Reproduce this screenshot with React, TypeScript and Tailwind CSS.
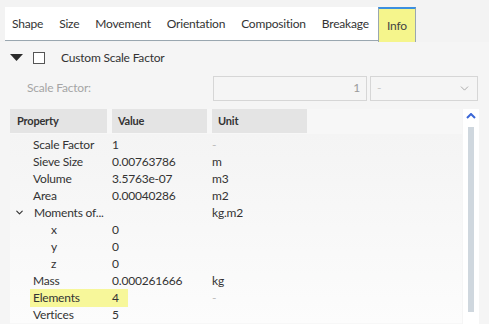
import { ChevronDown } from 'lucide-react'

const tabs = ['Shape', 'Size', 'Movement', 'Orientation', 'Composition', 'Breakage']

const rows = [
    { name: 'Scale Factor', value: '1', unit: '-', dim: true },
    { name: 'Sieve Size', value: '0.00763786', unit: 'm' },
    { name: 'Volume', value: '3.5763e-07', unit: 'm3' },
    { name: 'Area', value: '0.00040286', unit: 'm2' },
    { name: 'Moments of...', value: '', unit: 'kg.m2', group: true },
    { name: 'x', value: '0', unit: '', child: true },
    { name: 'y', value: '0', unit: '', child: true },
    { name: 'z', value: '0', unit: '', child: true },
    { name: 'Mass', value: '0.000261666', unit: 'kg' },
    { name: 'Elements', value: '4', unit: '-', dim: true, mark: true },
    { name: 'Vertices', value: '5', unit: '' },
]

export default function App() {
    return (
        <div className="h-[324px] w-[489px] overflow-hidden whitespace-nowrap bg-[#f3f3f3] text-[12px] tracking-[-0.2px] text-[#333] [font-family:Lato,'Noto_Sans',sans-serif]">
            {/* tab bar */}
            <div className="flex h-[42px] pt-[7px]">
                <div className="ml-[5px] flex h-[34px] w-[373px] items-center gap-[16px] border-b border-[#9aa7b0] bg-white pl-[7px]">
                    {tabs.map((t) => (
                        <span key={t}>{t}</span>
                    ))}
                </div>
                <div className="flex h-[35px] w-[38px] items-center justify-center border-x border-t-2 border-x-[#9aa7b0] border-t-[#3b8fe0] bg-[#f5f58c] text-[#444]">
                    Info
                </div>
            </div>

            {/* panel */}
            <div className="h-[282px] bg-[#f5f5f5] pl-[10px]">
                <div className="flex h-[30px] items-center pt-[2px]">
                    <svg width="13" height="8" viewBox="0 0 13 8" className="mr-[10px]">
                        <path d="M0 0 H13 L6.5 7 Z" fill="#2b2b2b" />
                    </svg>
                    <div className="mr-[16px] h-[12px] w-[12px] border border-[#555] bg-white" />
                    <span>Custom Scale Factor</span>
                </div>
                <div className="flex h-[32px] items-center">
                    <span className="ml-[17px] text-[#a5a5a5]">Scale Factor:</span>
                    <div className="ml-auto flex items-center pr-[11px]">
                        <div className="flex h-[25px] w-[154px] items-center justify-end border border-[#d6d6d6] bg-[#f5f5f5] pr-[6px] text-[#9a9a9a]">
                            1
                        </div>
                        <div className="ml-[3px] flex h-[25px] w-[108px] items-center justify-between border border-[#d6d6d6] bg-[#f5f5f5] px-[6px] text-[#c8c8c8]">
                            <span>-</span>
                            <ChevronDown className="size-[13px] text-[#999]" strokeWidth={1.5} />
                        </div>
                    </div>
                </div>

                {/* table */}
                <div className="mt-[5px] flex">
                    <div className="w-[452px] bg-[#f7f7f7]">
                        <div className="flex h-[25px] gap-[5px] bg-[#f7f7f7] pb-[1px] text-[11px] font-bold text-[#333]">
                            <div className="flex w-[97px] items-center bg-[#e4e4e4] px-[7px]">Property</div>
                            <div className="flex w-[95px] items-center bg-[#e4e4e4] px-[6px]">Value</div>
                            <div className="flex w-[95px] items-center bg-[#e4e4e4] px-[6px]">Unit</div>
                        </div>
                        <div className="bg-gradient-to-b from-[#f4f4f4] to-[#fcfcfc] pt-[2px]">
                            {rows.map((r) => (
                                <div key={r.name} className="flex h-[17px] items-center">
                                    <div className="w-[102px]">
                                        {r.group ? (
                                            <div className="flex items-center">
                                                <ChevronDown className="ml-[4px] mr-[9px] size-[11px]" strokeWidth={2.5} />
                                                <span>{r.name}</span>
                                            </div>
                                        ) : (
                                            <span
                                                className={
                                                    r.child
                                                        ? 'ml-[41px]'
                                                        : r.mark
                                                          ? 'ml-[20px] inline-block w-[98px] bg-[#f7f79a] pl-[3px]'
                                                          : 'ml-[23px]'
                                                }
                                            >
                                                {r.name}
                                            </span>
                                        )}
                                    </div>
                                    <div className="w-[100px]">
                                        {r.mark ? <span className="-ml-[6px] inline-block w-[22px] bg-[#f7f79a] pl-[6px]">{r.value}</span> : r.value}
                                    </div>
                                    <div className={r.dim ? 'text-[#bbb]' : ''}>{r.unit}</div>
                                </div>
                            ))}
                        </div>
                    </div>
                    {/* scrollbar */}
                    <div className="ml-[1px] flex h-[216px] w-[16px] flex-col items-center bg-white">
                        <svg width="10" height="6" viewBox="0 0 10 6" className="mt-[4px]">
                            <path d="M1 5 L5 1 L9 5" stroke="#3a66d6" strokeWidth="2" fill="none" />
                        </svg>
                        <div className="mt-[8px] h-[185px] w-[6px] bg-[#cfd7de]" />
                    </div>
                </div>
            </div>
        </div>
    )
}
